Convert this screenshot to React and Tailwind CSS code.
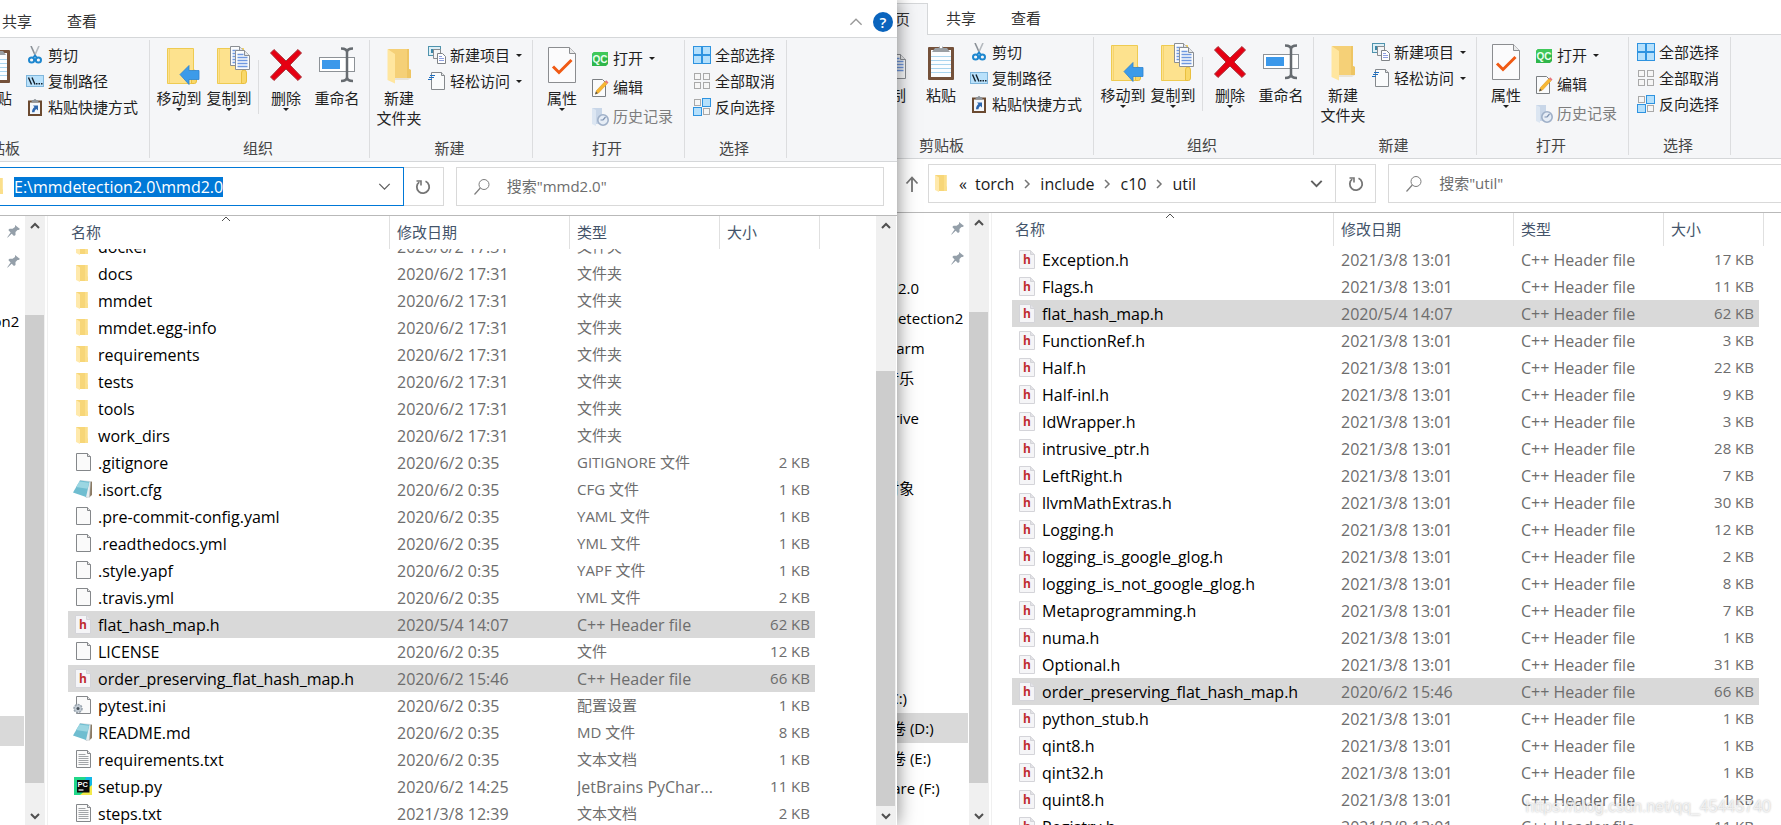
import { useState } from "react";
import clsx from "clsx";

const FONT = "font-['Open_Sans','Noto_Sans_CJK_SC',sans-serif]";

/* ---------- icons ---------- */

function Caret() {
  return (
    <svg width="6" height="3" viewBox="0 0 6 3" className="shrink-0">
      <path d="M0 0h6L3 3z" fill="#1f1f1f" />
    </svg>
  );
}

function Chevron({ dir = "up", size = 10, color = "#505050", width = 2 }) {
  const paths = {
    up: "M1 7l4-4 4 4",
    down: "M1 3l4 4 4-4",
    right: "M3 1l4 4-4 4",
  };
  return (
    <svg width={size} height={size} viewBox="0 0 10 10" fill="none" className="shrink-0">
      <path d={paths[dir]} stroke={color} strokeWidth={width} />
    </svg>
  );
}

function ScissorsIcon() {
  return (
    <svg width="18" height="18" viewBox="0 0 18 18" fill="none">
      <path d="M5 0l5 11" stroke="#8a9097" strokeWidth="1.6" />
      <path d="M13 0L8 11" stroke="#b4b9be" strokeWidth="1.6" />
      <circle cx="5.6" cy="14" r="2.6" stroke="#1e87cf" strokeWidth="2" />
      <circle cx="12.4" cy="14" r="2.6" stroke="#1e87cf" strokeWidth="2" />
      <path d="M7 12l2-2.5 2 2.5" stroke="#1e87cf" strokeWidth="2" />
    </svg>
  );
}

function CopyPathIcon() {
  return (
    <svg width="18" height="18" viewBox="0 0 18 18">
      <rect x="0.5" y="3.5" width="17" height="11" fill="#b9e1fb" stroke="#7fb6dc" />
      <path d="M2.5 5.5l3 7M6 5.5l3 7" stroke="#14202c" strokeWidth="1.4" />
      <path d="M10 11h1.5v1.5H10zM12.5 11H14v1.5h-1.5zM15 11h1.5v1.5H15z" fill="#14202c" />
    </svg>
  );
}

function PasteShortcutIcon() {
  return (
    <svg width="18" height="18" viewBox="0 0 18 18">
      <rect x="2" y="2.5" width="14" height="15.5" fill="#6b4a31" />
      <rect x="4" y="4.5" width="10" height="11.5" fill="#f4f7fb" />
      <path d="M5 4.5l1.5-2.5h1.2a1.4 1.4 0 0 1 2.6 0h1.2L13 4.5z" fill="#8e949a" />
      <path d="M7 7.5h5v5l-1.700-1.600c-1.200 1-1.800 2-1.800 3.400H6c0-2.200.9-3.900 2.500-5.200z" fill="#2d66ae" />
    </svg>
  );
}

function PasteIcon() {
  return (
    <svg width="28" height="38" viewBox="0 0 28 38">
      <rect x="1" y="4" width="26" height="33" rx="1" fill="#74513a" />
      <rect x="4" y="7" width="20" height="27" fill="#fbfdff" />
      <path d="M4 13.500h20M4 17.500h20M4 21.500h20M4 25.500h20M4 29.500h20" stroke="#a9d4ee" />
      <path d="M5 9l3-4h3.500a2.600 2.600 0 0 1 5 0H20l3 4z" fill="#9a9fa4" />
      <circle cx="14" cy="4" r="1.200" fill="#fff" />
    </svg>
  );
}

function Page({ x, y, w = 16, h = 20 }) {
  return (
    <g>
      <path
        d={`M${x} ${y}h${w - 5}l5 5v${h - 5}h-${w}z`}
        fill="#fbfcfd"
        stroke="#8b8f94"
      />
      <path d={`M${x + w - 5} ${y}v5h5`} fill="#e6e8ea" stroke="#8b8f94" />
      <path
        d={`M${x + 2} ${y + 4}h${w - 8}M${x + 2} ${y + 7}h${w - 4}M${x + 2} ${y + 10}h${w - 4}M${x + 2} ${y + 13}h${w - 4}M${x + 2} ${y + 16}h${w - 4}`}
        stroke="#6f98e0"
        strokeWidth="1.300"
      />
    </g>
  );
}

function CopyIcon() {
  return (
    <svg width="32" height="38" viewBox="0 0 32 38">
      <Page x={1.5} y={3.5} w={18} h={24} />
      <Page x={12.5} y={11.5} w={18} h={24} />
    </svg>
  );
}

function BigFolder({ children }) {
  return (
    <svg width="36" height="40" viewBox="-3 0 36 40" className="overflow-visible">
      <path d="M3.500 3.500h26v35h-26z" fill="#fde28e" stroke="#eecb52" />
      <path d="M5.500 4v34" stroke="#f7d46c" />
      <path d="M27.500 38.500V28q0-3 2.500-3t2.500 3v8q0 2.500-2 2.500z" fill="#f9d869" stroke="#e9bf3f" />
      {children}
    </svg>
  );
}

function MoveToIcon() {
  return (
    <BigFolder>
      <path d="M16 29.500l9-9v5h10v9H25v5z" fill="#3c9be9" stroke="#2c83d0" strokeWidth="0.800" />
    </BigFolder>
  );
}

function CopyToIcon() {
  return (
    <BigFolder>
      <Page x={16.500} y={1.500} w={14} h={19} />
      <Page x={21.500} y={5.500} w={14} h={19} />
    </BigFolder>
  );
}

function DeleteIcon() {
  return (
    <svg width="32" height="32" viewBox="0 0 32 32">
      <path
        d="M4 0.500L16 12 28 0.500 31.500 4 20 16 31.500 28 28 31.500 16 20 4 31.500 0.500 28 12 16 0.500 4z"
        fill="#e60012"
        stroke="#a8323a"
      />
    </svg>
  );
}

function RenameIcon() {
  return (
    <svg width="36" height="36" viewBox="0 0 36 36" fill="none">
      <rect x="0.500" y="10.500" width="35" height="14" fill="#fff" stroke="#8d9297" />
      <rect x="3" y="13" width="18" height="9" fill="#3b98ea" />
      <path d="M22 1.500q6 0 6 4 0-4 6-4M28 4v27M22 34q6 0 6-4 0 4 6 4" stroke="#666b70" strokeWidth="2.500" />
    </svg>
  );
}

function NewFolderIcon() {
  return (
    <svg width="26" height="38" viewBox="0 0 26 38">
      <path d="M2 3h21v20l2 1v8H9z" fill="#f5d077" />
      <path d="M21 3h2v20l2 1v8h-4z" fill="#eec563" />
      <path d="M1.500 3L9 8v29.500L1.500 34z" fill="#ffe69f" />
      <path d="M9 32h16l-3 2H9z" fill="#e9e4d8" />
    </svg>
  );
}

function NewItemIcon() {
  return (
    <svg width="18" height="18" viewBox="0 0 18 18">
      <rect x="0.500" y="0.500" width="12" height="9" fill="#dff0f7" stroke="#4f93ad" />
      <rect x="3" y="3" width="4" height="4" fill="#3b87a8" />
      <path d="M5.500 3.500h7v9h-7z" fill="#f4f5f6" stroke="#888c90" />
      <path d="M9.500 7.500h5l3 3v7h-8z" fill="#fff" stroke="#7f8387" />
      <path d="M11 10.500h3M11 12.500h5M11 14.500h5" stroke="#8f9fe0" />
    </svg>
  );
}

function EasyAccessIcon() {
  return (
    <svg width="18" height="18" viewBox="0 0 18 18">
      <path d="M3.500 0.500h10l3 3v14h-13z" fill="#fafbfc" stroke="#85898d" />
      <path d="M13.500 0.500v3h3" fill="#e4e6e8" stroke="#85898d" />
      <path d="M2 3.500h5M1 5.500h5M0 7.500h4" stroke="#1f6fc0" strokeWidth="1.200" />
    </svg>
  );
}

function PropertiesIcon() {
  return (
    <svg width="30" height="38" viewBox="0 0 30 38">
      <path d="M1.500 1.500h21l6 6v29h-27z" fill="#fbfbfc" stroke="#8b8d90" />
      <path d="M22.500 1.500v6h6" fill="#e9eaeb" stroke="#8b8d90" />
      <path d="M6 20.500l6 6L24.500 14" stroke="#f05a14" strokeWidth="3" fill="none" />
    </svg>
  );
}

function QcIcon() {
  return (
    <svg width="18" height="18" viewBox="0 0 18 18">
      <path d="M3 2h14v12l-2 2H1V4z" fill="#2fb64a" />
      <path d="M3 2h14v6H1V4z" fill="#3fc85a" />
      <text x="9" y="13" textAnchor="middle" fontSize="10" fontWeight="700" fontFamily="Liberation Sans, sans-serif" fill="#eafff0">
        QC
      </text>
    </svg>
  );
}

function EditIcon() {
  return (
    <svg width="18" height="18" viewBox="0 0 18 18">
      <path d="M1.500 0.500h10l3 3v14h-13z" fill="#fafbfc" stroke="#7b7f83" />
      <path d="M4.500 15l1-3.500L14 2.500l2.200 2.200L7.500 14z" fill="#f7b733" stroke="#e09a24" strokeWidth="0.600" />
      <path d="M14 2.500l1.300-1.300 2.200 2.200-1.300 1.300z" fill="#e8737b" />
      <path d="M4 15.500l1-3 1.800 1.800z" fill="#4a4f55" />
    </svg>
  );
}

function HistoryIcon() {
  return (
    <svg width="18" height="18" viewBox="0 0 18 18">
      <path d="M1 0h10v16H4z" fill="#c8d6e8" />
      <path d="M1 0l4 2v16l-4-2z" fill="#dce6f2" />
      <circle cx="12" cy="12" r="5.200" fill="#e6edf6" stroke="#9fb0c8" strokeWidth="1.600" />
      <path d="M12 12l2.500-3M12 12H9.500" stroke="#7f93b2" strokeWidth="1.200" />
    </svg>
  );
}

const SQUARES = [
  [0.5, 0.5],
  [9.5, 0.5],
  [0.5, 9.5],
  [9.5, 9.5],
];

function SelectIcon({ on }) {
  return (
    <svg width="18" height="18" viewBox="0 0 18 18">
      {SQUARES.map(([x, y], i) =>
        on[i] ? (
          <rect key={i} x={x} y={y} width="8" height="8" fill="#b5e0fc" stroke="#2e93e0" />
        ) : (
          <rect key={i} x={x + 1} y={y + 1} width="6" height="6" fill="#f6f6f6" stroke="#a9a9a9" />
        )
      )}
    </svg>
  );
}

function FolderIcon() {
  return (
    <svg width="18" height="18" viewBox="0 0 18 18">
      <path d="M2 0h11.500v11.500l.500.500v4H5z" fill="#f7d678" />
      <path d="M11 0h2.500v11.500l.500.500v4h-3z" fill="#fbdf8b" />
      <path d="M2 0l4 2.500V17l-4-2z" fill="#ffe9ab" />
    </svg>
  );
}

function FileIcon({ lines, gear }) {
  return (
    <svg width="20" height="20" viewBox="0 0 20 20">
      <path d="M3.500 0.500h11l3 3v14h-14z" fill="#fafafa" stroke="#84878a" />
      <path d="M14.500 0.500v3h3" fill="#e6e6e6" stroke="#84878a" />
      {lines && <path d="M5.500 4.500h7M5.500 6.500h10M5.500 8.500h10M5.500 10.500h10M5.500 12.500h10M5.500 14.500h10" stroke="#a2a5a8" />}
      {gear && (
        <g>
          <circle cx="5" cy="12.500" r="4" fill="#c3ccd4" stroke="#98a3ad" strokeDasharray="2 1" strokeWidth="1.500" />
          <circle cx="5" cy="12.500" r="1.500" fill="#47515a" />
        </g>
      )}
    </svg>
  );
}

function NotepadIcon() {
  return (
    <svg width="20" height="20" viewBox="0 0 20 20">
      <path d="M16 2l3-.500V15l-3 2.500z" fill="#8b7a63" />
      <path d="M7 0.500l10.500 1L16.500 17 13 17.500z" fill="#e8edf0" stroke="#b2bcc2" strokeWidth="0.500" />
      <path d="M7 0.500l9.500 1.300L13 17 0 12.500z" fill="#6fbdd0" />
      <path d="M6.500 1.500l9.500 1.300-1.500 6L3 7z" fill="#9bd6e2" />
    </svg>
  );
}

function HeaderIcon() {
  return (
    <svg width="20" height="20" viewBox="0 0 20 20">
      <path d="M2.500 0.500h11l4 4v14h-15z" fill="#f5f5f7" stroke="#d4d4d9" />
      <path d="M13.500 0.500v4h4" fill="#e2e2e6" stroke="#d4d4d9" />
      <text x="10" y="14" textAnchor="middle" fontSize="12" fontWeight="700" fontFamily="Open Sans, sans-serif" fill="#bf2c30">
        h
      </text>
    </svg>
  );
}

function PycharmIcon() {
  return (
    <svg width="20" height="20" viewBox="0 0 20 20">
      <rect x="1" y="0" width="18" height="18" fill="#21d789" />
      <path d="M19 0v9H10L13 0z" fill="#12b8e6" />
      <path d="M19 8v10H7z" fill="#f3ea4a" />
      <rect x="4" y="3" width="12.500" height="12.500" fill="#0b0b0b" />
      <text x="4.500" y="9.500" fontSize="7.500" fontWeight="700" fontFamily="Liberation Sans, sans-serif" fill="#fff">
        PC
      </text>
      <path d="M5.500 13h5" stroke="#fff" strokeWidth="1.200" />
    </svg>
  );
}

function PinIcon() {
  return (
    <svg width="13" height="13" viewBox="0 0 13 13">
      <path d="M8 0l5 4-1.500 1-1 0-2 2 0 3-1.500 1L4.700 8.800 0.500 12.700 0.300 12.300 3.600 7.500 1.300 5l1.300-1.300 3 0L8 1.900z" fill="#949fa9" />
    </svg>
  );
}

function SearchIcon() {
  return (
    <svg width="16" height="16" viewBox="0 0 16 16" fill="none" className="shrink-0">
      <circle cx="10" cy="5.500" r="5" stroke="#7d7d7d" />
      <path d="M6.300 9L0.500 15.500" stroke="#7d7d7d" strokeWidth="1.200" />
    </svg>
  );
}

function RefreshIcon() {
  return (
    <svg width="16" height="16" viewBox="0 0 16 16" fill="none">
      <path d="M10.500 2.300a6.200 6.200 0 1 1-6.300.8" stroke="#757575" strokeWidth="1.800" />
      <path d="M1.500 2h4.500v4.500" stroke="#757575" strokeWidth="1.600" />
    </svg>
  );
}

function UpIcon() {
  return (
    <svg width="14" height="16" viewBox="0 0 14 16" fill="none">
      <path d="M7 16V1.500M1.500 7.500L7 1.500l5.500 6" stroke="#757575" strokeWidth="1.800" />
    </svg>
  );
}

const FILE_ICONS = {
  folder: <FolderIcon />,
  file: <FileIcon />,
  text: <FileIcon lines />,
  ini: <FileIcon gear />,
  notepad: <NotepadIcon />,
  header: <HeaderIcon />,
  pycharm: <PycharmIcon />,
};

/* ---------- data ---------- */

const HEADER_TYPE = "C++ Header file";

const mmdFiles = [
  ["folder", "docker", "2020/6/2 17:31", "文件夹", ""],
  ["folder", "docs", "2020/6/2 17:31", "文件夹", ""],
  ["folder", "mmdet", "2020/6/2 17:31", "文件夹", ""],
  ["folder", "mmdet.egg-info", "2020/6/2 17:31", "文件夹", ""],
  ["folder", "requirements", "2020/6/2 17:31", "文件夹", ""],
  ["folder", "tests", "2020/6/2 17:31", "文件夹", ""],
  ["folder", "tools", "2020/6/2 17:31", "文件夹", ""],
  ["folder", "work_dirs", "2020/6/2 17:31", "文件夹", ""],
  ["file", ".gitignore", "2020/6/2 0:35", "GITIGNORE 文件", "2 KB"],
  ["notepad", ".isort.cfg", "2020/6/2 0:35", "CFG 文件", "1 KB"],
  ["file", ".pre-commit-config.yaml", "2020/6/2 0:35", "YAML 文件", "1 KB"],
  ["file", ".readthedocs.yml", "2020/6/2 0:35", "YML 文件", "1 KB"],
  ["file", ".style.yapf", "2020/6/2 0:35", "YAPF 文件", "1 KB"],
  ["file", ".travis.yml", "2020/6/2 0:35", "YML 文件", "2 KB"],
  ["header", "flat_hash_map.h", "2020/5/4 14:07", HEADER_TYPE, "62 KB"],
  ["file", "LICENSE", "2020/6/2 0:35", "文件", "12 KB"],
  ["header", "order_preserving_flat_hash_map.h", "2020/6/2 15:46", HEADER_TYPE, "66 KB"],
  ["ini", "pytest.ini", "2020/6/2 0:35", "配置设置", "1 KB"],
  ["notepad", "README.md", "2020/6/2 0:35", "MD 文件", "8 KB"],
  ["text", "requirements.txt", "2020/6/2 0:35", "文本文档", "1 KB"],
  ["pycharm", "setup.py", "2020/6/2 14:25", "JetBrains PyChar...", "11 KB"],
  ["text", "steps.txt", "2021/3/8 12:39", "文本文档", "2 KB"],
];

const utilFiles = [
  ["Exception.h", "17 KB"],
  ["Flags.h", "11 KB"],
  ["flat_hash_map.h", "62 KB", "2020/5/4 14:07"],
  ["FunctionRef.h", "3 KB"],
  ["Half.h", "22 KB"],
  ["Half-inl.h", "9 KB"],
  ["IdWrapper.h", "3 KB"],
  ["intrusive_ptr.h", "28 KB"],
  ["LeftRight.h", "7 KB"],
  ["llvmMathExtras.h", "30 KB"],
  ["Logging.h", "12 KB"],
  ["logging_is_google_glog.h", "2 KB"],
  ["logging_is_not_google_glog.h", "8 KB"],
  ["Metaprogramming.h", "7 KB"],
  ["numa.h", "1 KB"],
  ["Optional.h", "31 KB"],
  ["order_preserving_flat_hash_map.h", "66 KB", "2020/6/2 15:46"],
  ["python_stub.h", "1 KB"],
  ["qint8.h", "1 KB"],
  ["qint32.h", "1 KB"],
  ["quint8.h", "1 KB"],
  ["Registry.h", "11 KB"],
].map(([name, size, date = "2021/3/8 13:01"]) => ["header", name, date, HEADER_TYPE, size]);

const SELECTED = ["flat_hash_map.h", "order_preserving_flat_hash_map.h"];

// Chinese labels are set one size smaller than plain Latin ones
const isLatin = (text) => !/[\u4e00-\u9fff]/.test(text);

/* ---------- ribbon ---------- */

function BigButton({ icon, label, second, menu, className = "w-[50px]" }) {
  return (
    <button className={clsx("flex shrink-0 flex-col items-center pt-1", className)}>
      <span className="flex h-[42px] items-center justify-center">{icon}</span>
      <span className="mt-0.5 leading-5 whitespace-nowrap">{label}</span>
      {second && <span className="leading-5 whitespace-nowrap">{second}</span>}
      {menu && <Caret />}
    </button>
  );
}

function SmallButton({ icon, label, menu, disabled, tall }) {
  return (
    <button
      disabled={disabled}
      className={clsx(
        "flex items-center gap-1 whitespace-nowrap",
        tall ? "h-[29px]" : "h-[26px]",
        disabled && "text-[#7d7d7d]"
      )}
    >
      <span className="flex w-[18px] justify-center">{icon}</span>
      <span>{label}</span>
      {menu && (
        <span className="pl-0.5">
          <Caret />
        </span>
      )}
    </button>
  );
}

function Group({ label, className, children }) {
  return (
    <div className={clsx("mt-0.5 mb-[3px] flex shrink-0 flex-col border-r border-[#dcdddf]", className)}>
      <div className="flex flex-1 items-start">{children}</div>
      <div className="pr-[3px] text-center leading-5 text-[#444]">{label}</div>
    </div>
  );
}

function Ribbon() {
  return (
    <div className="flex h-[124px] shrink-0 border-b border-[#d5d7d9] bg-[#f5f6f8] text-[15px] text-[#1f1f1f]">
      <Group label="剪贴板" className="w-[301px]">
        <div className="flex flex-1 justify-end pr-[11px]">
          <BigButton icon={<CopyIcon />} label="复制" />
          <BigButton icon={<PasteIcon />} label="粘贴" />
          <div className="pt-0.5 pl-1">
            <SmallButton icon={<ScissorsIcon />} label="剪切" />
            <SmallButton icon={<CopyPathIcon />} label="复制路径" />
            <SmallButton icon={<PasteShortcutIcon />} label="粘贴快捷方式" />
          </div>
        </div>
      </Group>

      <Group label="组织" className="w-[220px]">
        <div className="flex pl-1">
          <BigButton icon={<MoveToIcon />} label="移动到" menu />
          <BigButton icon={<CopyToIcon />} label="复制到" menu />
          <div className="mx-1 mt-5 h-[54px] w-px bg-[#dcdddf]" />
          <BigButton icon={<DeleteIcon />} label="删除" menu className="w-[46px]" />
          <BigButton icon={<RenameIcon />} label="重命名" className="ml-[3px] w-[50px]" />
        </div>
      </Group>

      <Group label="新建" className="w-[163px]">
        <div className="flex pl-1">
          <BigButton icon={<NewFolderIcon />} label="新建" second="文件夹" />
          <div className="pt-0.5 pl-1">
            <SmallButton icon={<NewItemIcon />} label="新建项目" menu />
            <SmallButton icon={<EasyAccessIcon />} label="轻松访问" menu />
          </div>
        </div>
      </Group>

      <Group label="打开" className="w-[152px]">
        <div className="flex pl-1">
          <BigButton icon={<PropertiesIcon />} label="属性" menu />
          <div className="pt-1 pl-1">
            <SmallButton tall icon={<QcIcon />} label="打开" menu />
            <SmallButton tall icon={<EditIcon />} label="编辑" />
            <SmallButton tall icon={<HistoryIcon />} label="历史记录" disabled />
          </div>
        </div>
      </Group>

      <Group label="选择" className="w-[102px]">
        <div className="pt-0.5 pl-2">
          <SmallButton icon={<SelectIcon on={[1, 1, 1, 1]} />} label="全部选择" />
          <SmallButton icon={<SelectIcon on={[0, 0, 0, 0]} />} label="全部取消" />
          <SmallButton icon={<SelectIcon on={[0, 1, 1, 0]} />} label="反向选择" />
        </div>
      </Group>
    </div>
  );
}

function TabBar({ className, help }) {
  return (
    <div className={clsx("relative flex shrink-0 items-end gap-px border-b border-[#d5d7d9] text-[15px] text-[#333]", className)}>
      <button className="ml-[70px] -mb-px h-8 border-t border-r border-[#d5d7d9] bg-[#f5f6f8] px-[17px]">主页</button>
      <button className="h-[31px] px-[17px]">共享</button>
      <button className="h-[31px] px-[17px]">查看</button>
      {help && (
        <div className="ml-auto flex h-[31px] items-center gap-2.5 pr-1">
          <button aria-label="最小化功能区">
            <Chevron size={14} color="#9a9a9a" width={1} />
          </button>
          <button
            aria-label="帮助"
            className="flex size-5 items-center justify-center rounded-full bg-[#0a64bd] text-[15px] leading-5 font-semibold text-white"
          >
            ?
          </button>
        </div>
      )}
    </div>
  );
}

/* ---------- address row ---------- */

function PathInput({ value }) {
  const [path, setPath] = useState(value);
  return (
    <div className="ml-[7px] flex flex-1">
      <input
        aria-label="地址"
        value={path}
        onChange={(e) => setPath(e.target.value)}
        className="field-sizing-content h-5 bg-[#0078d7] text-base leading-5 text-white outline-none"
      />
    </div>
  );
}

function Breadcrumbs({ items }) {
  return (
    <nav className="flex flex-1 items-center text-base text-[#1a1a1a]">
      <button className="w-6 text-center">«</button>
      {items.map((item, i) => (
        <span key={item} className="flex items-center">
          {i > 0 && (
            <span className="flex w-[26px] justify-center">
              <Chevron dir="right" color="#757575" width={1.5} />
            </span>
          )}
          <button>{item}</button>
        </span>
      ))}
    </nav>
  );
}

function AddressRow({ win }) {
  return (
    <div className={clsx("flex h-[54px] shrink-0 items-start border-b border-[#b9b9b9] pt-[5px] pl-[103px]", win.rowClass)}>
      <button aria-label="上移" className="flex h-[39px] w-8 items-center justify-center">
        <UpIcon />
      </button>
      <div
        className={clsx(
          "flex h-[39px] min-w-0 items-center border pr-3 pl-1",
          win.addressClass
        )}
      >
        <FolderIcon />
        {win.path ? <PathInput value={win.path} /> : <Breadcrumbs items={win.crumbs} />}
        <button aria-label="以前的位置">
          <Chevron dir="down" size={13} color="#5f5f5f" width={win.path ? 1 : 1.5} />
        </button>
      </div>
      <button
        aria-label="刷新"
        className="flex h-[39px] w-10 shrink-0 items-center justify-center border border-l-0 border-[#d9d9d9]"
      >
        <RefreshIcon />
      </button>
      <label
        className={clsx(
          "flex h-[39px] min-w-0 items-center gap-[17px] border border-[#d9d9d9] pl-[17px]",
          win.searchClass
        )}
      >
        <SearchIcon />
        <input
          aria-label="搜索"
          placeholder={win.search}
          className="w-full min-w-0 text-[15px] outline-none placeholder:text-[#6d6d6d]"
        />
      </label>
    </div>
  );
}

/* ---------- panes ---------- */

function Scrollbar({ before, thumb, after }) {
  return (
    <div className="mr-px flex w-5 shrink-0 flex-col bg-[#f0f0f0] pr-px">
      <button aria-label="向上滚动" className="flex h-5 items-center justify-center">
        <Chevron />
      </button>
      <div style={{ flexGrow: before }} />
      <div className="bg-[#cdcdcd]" style={{ flexGrow: thumb }} />
      <div style={{ flexGrow: after }} />
      <button aria-label="向下滚动" className="flex h-[19px] items-center justify-center">
        <Chevron dir="down" />
      </button>
    </div>
  );
}

function NavItem({ children, pinned, root, active }) {
  return (
    <a
      href="#"
      className={clsx(
        "mr-px flex h-[30px] shrink-0 items-center justify-between pr-1 whitespace-nowrap",
        root ? "pl-[60px]" : "pl-[68px]",
        active && "bg-[#d9d9d9]"
      )}
    >
      {children}
      {pinned && <PinIcon />}
    </a>
  );
}

function NavPane() {
  return (
    <nav className="flex w-44 shrink-0 flex-col overflow-hidden text-[15px] text-black">
      <NavItem pinned>文档</NavItem>
      <NavItem pinned>图片</NavItem>
      <NavItem>mmd2.0</NavItem>
      <NavItem>mmdetection2</NavItem>
      <NavItem>PyCharm</NavItem>
      <NavItem>QQ音乐</NavItem>
      <div className="h-2.5 shrink-0" />
      <NavItem root>OneDrive</NavItem>
      <div className="h-2.5 shrink-0" />
      <NavItem root>电脑</NavItem>
      <NavItem>3D 对象</NavItem>
      <NavItem>视频</NavItem>
      <NavItem>图片</NavItem>
      <NavItem>文档</NavItem>
      <NavItem>下载</NavItem>
      <NavItem>音乐</NavItem>
      <NavItem>桌面</NavItem>
      <NavItem>OS (C:)</NavItem>
      <NavItem active>新加卷 (D:)</NavItem>
      <NavItem>新加卷 (E:)</NavItem>
      <NavItem root>Software (F:)</NavItem>
    </nav>
  );
}

// the first row of a scrolled list is cut off by the column header
function Cell({ cut, className, children }) {
  return (
    <td className={clsx("p-0", className)}>
      <div className={clsx("flex items-end overflow-hidden", cut ? "h-[11px]" : "h-[27px]")}>
        <div className="flex h-[27px] w-full shrink-0 items-center">{children}</div>
      </div>
    </td>
  );
}

function FileTable({ files, scrolled }) {
  return (
    <div className="min-w-0 flex-1 overflow-hidden pl-5">
      <table className="w-[752px] table-fixed border-separate border-spacing-0 text-[15px] whitespace-nowrap">
        <colgroup>
          <col className="w-[322px]" />
          <col className="w-[180px]" />
          <col className="w-[150px]" />
          <col className="w-[95px]" />
          <col className="w-[5px]" />
        </colgroup>
        <thead>
          <tr className="h-[33px] text-left text-[#44546a]">
            <th className="relative border-r border-[#e0e0e0] p-0 pl-[3px] font-normal">
              名称
              <span className="absolute inset-x-0 -top-0.5 flex justify-center pr-1.5">
                <Chevron width={1} />
              </span>
            </th>
            <th className="border-r border-[#e0e0e0] p-0 pl-[7px] font-normal">修改日期</th>
            <th className="border-r border-[#e0e0e0] p-0 pl-[7px] font-normal">类型</th>
            <th colSpan={2} className="border-r border-[#e0e0e0] p-0 pl-[7px] font-normal">
              大小
            </th>
          </tr>
        </thead>
        <tbody className="text-[#6d6d6d]">
          {files.map(([icon, name, date, type, size], i) => {
            const cut = scrolled && i === 0;
            const bg = SELECTED.includes(name) ? "bg-[#d9d9d9]" : "";
            return (
              <tr key={name}>
                <Cell cut={cut} className={clsx("text-base text-black", bg)}>
                  <span className="mr-[5px] ml-[5px] flex w-5 justify-center">{FILE_ICONS[icon]}</span>
                  {name}
                </Cell>
                <Cell cut={cut} className={clsx("pl-[7px] text-base", bg)}>{date}</Cell>
                <Cell cut={cut} className={clsx("pl-[7px]", isLatin(type) && "text-base", bg)}>{type}</Cell>
                <Cell cut={cut} className={bg}>
                  <span className="w-full pr-[5px] text-right">{size}</span>
                </Cell>
                <td className="p-0" />
              </tr>
            );
          })}
        </tbody>
      </table>
    </div>
  );
}

/* ---------- windows ---------- */

const windows = [
  {
    title: "mmd2.0",
    frame: "z-10 shadow-[0_0_18px_rgba(0,0,0,0.5)]",
    inner: "w-[calc(100%+151px)]",
    tabs: "h-[38px]",
    help: true,
    path: "E:\\mmdetection2.0\\mmd2.0",
    search: '搜索"mmd2.0"',
    rowClass: "pr-[13px]",
    addressClass: "flex-[420] border-[#0078d7]",
    searchClass: "ml-3 flex-[428]",
    files: mmdFiles,
    scrolled: true,
    scrollbar: { before: 135, thumb: 435, after: 0 },
  },
  {
    title: "util",
    frame: "",
    inner: "w-[calc(100%+104px)]",
    tabs: "h-[35px]",
    crumbs: ["torch", "include", "c10", "util"],
    search: '搜索"util"',
    rowClass: "",
    addressClass: "flex-[409] border-[#d9d9d9]",
    searchClass: "ml-3 flex-[393] border-r-0",
    files: utilFiles,
  },
];

function ExplorerWindow({ win }) {
  return (
    <section aria-label={win.title} className={clsx("relative h-full min-w-0 bg-white", win.frame)}>
      <div className="flex h-full justify-end overflow-hidden">
        <div className={clsx("flex h-full shrink-0 flex-col", win.inner)}>
          <TabBar className={win.tabs} help={win.help} />
          <Ribbon />
          <AddressRow win={win} />
          <div className="flex min-h-0 flex-1">
            <NavPane />
            <Scrollbar before={79} thumb={468} after={23} />
            <div className="ml-px flex min-w-0 flex-1 border-l border-[#f0f0f0]">
              <FileTable files={win.files} scrolled={win.scrolled} />
              {win.scrollbar && <Scrollbar {...win.scrollbar} />}
            </div>
          </div>
        </div>
      </div>
    </section>
  );
}

export default function App() {
  return (
    <main className={clsx("relative grid h-screen grid-cols-[897fr_884fr] grid-rows-1 overflow-hidden bg-white", FONT)}>
      {windows.map((win) => (
        <ExplorerWindow key={win.title} win={win} />
      ))}
      <p className="absolute right-2.5 bottom-1.5 z-20 font-['Liberation_Sans',sans-serif] text-base text-white/70 [text-shadow:0_0_2px_rgba(0,0,0,0.3)]">
        https://blog.csdn.net/qq_45445740
      </p>
    </main>
  );
}
